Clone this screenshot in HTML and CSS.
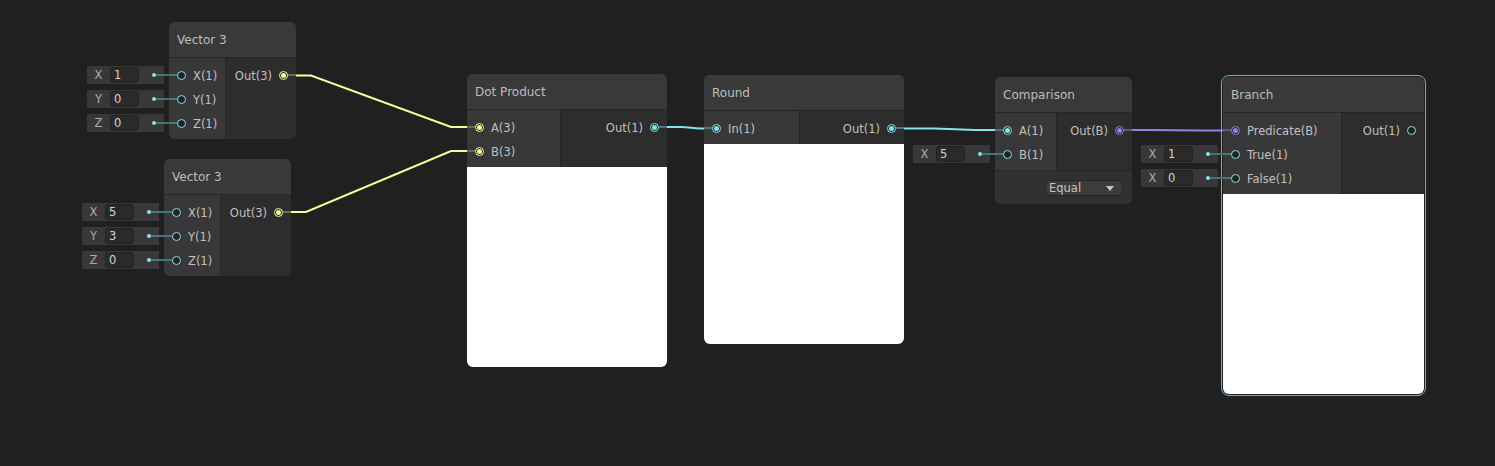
FILE: index.html
```html
<!DOCTYPE html>
<html>
<head>
<meta charset="utf-8">
<link rel="stylesheet" href="styles.css">
</head>
<body>
<div class="canvas">
  <svg class="edges" width="1495" height="466" viewBox="0 0 1495 466">
    <path class="e-v3" d="M296 75.5 H311 L451 127 H467"/>
    <path class="e-v3" d="M291 212 H306 L451 151 H467"/>
    <path class="e-v1" d="M667 127 H680 C690 127 692 128.5 700 128.5 H704"/>
    <path class="e-v1" d="M904 128.5 H935 L975 130 H995"/>
    <path class="e-b" d="M1132 130 H1150 L1200 130.5 H1223"/>
  </svg>

  <!-- Vector 3 (top) -->
  <div class="node" style="left:169px;top:22px;width:127px">
    <div class="title">Vector 3</div>
    <div class="ports">
      <div class="inputs" style="width:57px">
        <div class="port in">
          <div class="field"><span class="fl">X</span><span class="fv">1</span><span class="fdot"></span></div>
          <span class="wire"></span><span class="pc cy"></span><span class="lbl">X(1)</span>
        </div>
        <div class="port in">
          <div class="field"><span class="fl">Y</span><span class="fv">0</span><span class="fdot"></span></div>
          <span class="wire"></span><span class="pc cy"></span><span class="lbl">Y(1)</span>
        </div>
        <div class="port in">
          <div class="field"><span class="fl">Z</span><span class="fv">0</span><span class="fdot"></span></div>
          <span class="wire"></span><span class="pc cy"></span><span class="lbl">Z(1)</span>
        </div>
      </div>
      <div class="outputs">
        <div class="port out"><span class="lbl">Out(3)</span><span class="pc ye on"></span><span class="stub-o ye-s"></span></div>
      </div>
    </div>
  </div>

  <!-- Vector 3 (bottom) -->
  <div class="node" style="left:164px;top:159px;width:127px">
    <div class="title">Vector 3</div>
    <div class="ports">
      <div class="inputs" style="width:57px">
        <div class="port in">
          <div class="field"><span class="fl">X</span><span class="fv">5</span><span class="fdot"></span></div>
          <span class="wire"></span><span class="pc cy"></span><span class="lbl">X(1)</span>
        </div>
        <div class="port in">
          <div class="field"><span class="fl">Y</span><span class="fv">3</span><span class="fdot"></span></div>
          <span class="wire"></span><span class="pc cy"></span><span class="lbl">Y(1)</span>
        </div>
        <div class="port in">
          <div class="field"><span class="fl">Z</span><span class="fv">0</span><span class="fdot"></span></div>
          <span class="wire"></span><span class="pc cy"></span><span class="lbl">Z(1)</span>
        </div>
      </div>
      <div class="outputs">
        <div class="port out"><span class="lbl">Out(3)</span><span class="pc ye on"></span><span class="stub-o ye-s"></span></div>
      </div>
    </div>
  </div>

  <!-- Dot Product -->
  <div class="node" style="left:467px;top:74px;width:200px">
    <div class="title">Dot Product</div>
    <div class="ports">
      <div class="inputs" style="width:94px">
        <div class="port in"><span class="stub-i ye-s"></span><span class="pc ye on"></span><span class="lbl">A(3)</span></div>
        <div class="port in"><span class="stub-i ye-s"></span><span class="pc ye on"></span><span class="lbl">B(3)</span></div>
      </div>
      <div class="outputs">
        <div class="port out"><span class="lbl">Out(1)</span><span class="pc cy on"></span><span class="stub-o cy-s"></span></div>
      </div>
    </div>
    <div class="preview"></div>
  </div>

  <!-- Round -->
  <div class="node" style="left:704px;top:75px;width:200px">
    <div class="title">Round</div>
    <div class="ports">
      <div class="inputs" style="width:96px">
        <div class="port in"><span class="stub-i cy-s"></span><span class="pc cy on"></span><span class="lbl">In(1)</span></div>
      </div>
      <div class="outputs">
        <div class="port out"><span class="lbl">Out(1)</span><span class="pc cy on"></span><span class="stub-o cy-s"></span></div>
      </div>
    </div>
    <div class="preview"></div>
  </div>

  <!-- Comparison -->
  <div class="node" style="left:995px;top:77px;width:137px">
    <div class="title">Comparison</div>
    <div class="ports">
      <div class="inputs" style="width:62px">
        <div class="port in"><span class="stub-i cy-s"></span><span class="pc cy on"></span><span class="lbl">A(1)</span></div>
        <div class="port in">
          <div class="field"><span class="fl">X</span><span class="fv">5</span><span class="fdot"></span></div>
          <span class="wire"></span><span class="pc cy"></span><span class="lbl">B(1)</span>
        </div>
      </div>
      <div class="outputs">
        <div class="port out"><span class="lbl">Out(B)</span><span class="pc pu on"></span><span class="stub-o pu-s"></span></div>
      </div>
    </div>
    <div class="controls">
      <div class="dropdown"><span>Equal</span><span class="caret"></span></div>
    </div>
  </div>

  <!-- Branch (selected) -->
  <div class="selected" style="left:1221px;top:75px">
    <div class="node inner" style="width:201px">
      <div class="title">Branch</div>
      <div class="ports">
        <div class="inputs" style="width:119px">
          <div class="port in"><span class="stub-i pu-s"></span><span class="pc pu on"></span><span class="lbl">Predicate(B)</span></div>
          <div class="port in">
            <div class="field"><span class="fl">X</span><span class="fv">1</span><span class="fdot"></span></div>
            <span class="wire"></span><span class="pc cy"></span><span class="lbl">True(1)</span>
          </div>
          <div class="port in">
            <div class="field"><span class="fl">X</span><span class="fv">0</span><span class="fdot"></span></div>
            <span class="wire"></span><span class="pc cy"></span><span class="lbl">False(1)</span>
          </div>
        </div>
        <div class="outputs">
          <div class="port out"><span class="lbl">Out(1)</span><span class="pc cy"></span></div>
        </div>
      </div>
      <div class="preview"></div>
    </div>
  </div>
</div>
</body>
</html>
```

FILE: styles.css
```css
html, body {
  margin: 0;
  padding: 0;
  background: #202020;
}

.canvas {
  position: relative;
  width: 1495px;
  height: 466px;
  overflow: hidden;
  background: #202020;
  font-family: "DejaVu Sans", Verdana, sans-serif;
  color: #c0c0c0;
}

.edges {
  position: absolute;
  left: 0;
  top: 0;
}

.edges path {
  fill: none;
  stroke-width: 2;
}

.e-v3 { stroke: #f6ff9a; }
.e-v1 { stroke: #84e4e7; }
.e-b  { stroke: #9481e6; }

.node {
  position: absolute;
  display: flex;
  flex-direction: column;
  border-radius: 6px;
  background: #393939;
}

.node.inner {
  position: static;
}

.selected {
  position: absolute;
  border: 1px solid #44b8f8;
  border-radius: 8px;
  padding: 1px;
}

.title {
  height: 36px;
  box-sizing: border-box;
  padding-left: 8px;
  display: flex;
  align-items: center;
  font-size: 12px;
  color: #bdbdbd;
  background: #393939;
  border-radius: 6px 6px 0 0;
  border-bottom: 1px solid #262626;
}

.ports {
  display: flex;
  align-items: stretch;
}

.inputs {
  flex: none;
  box-sizing: border-box;
  padding: 5px 0 4px;
  background: #383838;
  border-right: 1px solid #262626;
}

.outputs {
  flex: 1;
  padding: 5px 0 4px;
  background: #2d2d2d;
}

.node > .ports:last-child .inputs { border-bottom-left-radius: 6px; }
.node > .ports:last-child .outputs { border-bottom-right-radius: 6px; }

.port {
  position: relative;
  height: 24px;
  display: flex;
  align-items: center;
  font-size: 11.5px;
  white-space: nowrap;
}

.port .lbl { padding-top: 1px; }

.port.in .pc { margin-left: 8px; }
.port.in .lbl { margin-left: 7px; }

.port.out { justify-content: flex-end; }
.port.out .lbl { margin-right: 7px; }
.port.out .pc { margin-right: 8px; }

.pc {
  position: relative;
  flex: none;
  box-sizing: border-box;
  width: 9px;
  height: 9px;
  border-radius: 50%;
  border: 1px solid #84e4e7;
  background: #222;
  z-index: 2;
}

.pc.cy { border-color: #84e4e7; }
.pc.ye { border-color: #f6ff9a; }
.pc.pu { border-color: #9481e6; }

.pc.on::after {
  content: "";
  position: absolute;
  left: 1px;
  top: 1px;
  width: 5px;
  height: 5px;
  border-radius: 50%;
}

.pc.cy.on::after { background: #84e4e7; }
.pc.ye.on::after { background: #f6ff9a; }
.pc.pu.on::after { background: #9481e6; }

.stub-i, .stub-o {
  position: absolute;
  top: 11px;
  height: 2px;
  width: 9px;
  z-index: 1;
}

.stub-i { left: 0; }
.stub-o { right: 0; }

.ye-s { background: #6b6d4f; }
.cy-s { background: #4f7476; }
.pu-s { background: #5c5580; }

.wire {
  position: absolute;
  left: -13px;
  top: 11px;
  width: 22px;
  height: 2px;
  background: #46777a;
  z-index: 1;
}

.field {
  position: absolute;
  right: calc(100% + 5px);
  top: 3px;
  width: 77px;
  height: 18px;
  display: flex;
  align-items: center;
  background: #383838;
  font-size: 11.5px;
}

.fl {
  width: 23px;
  text-align: center;
  color: #aaaaaa;
  flex: none;
}

.fv {
  box-sizing: border-box;
  width: 29px;
  height: 16px;
  line-height: 14px;
  padding-left: 3px;
  background: #2a2a2a;
  border: 1px solid #222222;
  border-radius: 3px;
  color: #d2d2d2;
  flex: none;
}

.fdot {
  position: absolute;
  right: 8px;
  top: 7px;
  width: 4px;
  height: 4px;
  border-radius: 50%;
  background: #84e4e7;
}

.preview {
  height: 200px;
  background: #ffffff;
  border-radius: 0 0 6px 6px;
}

.controls {
  height: 34px;
  box-sizing: border-box;
  border-top: 1px solid #262626;
  background: #313131;
  border-radius: 0 0 6px 6px;
  display: flex;
  justify-content: flex-end;
  align-items: flex-start;
  padding: 9px 9px 0 0;
}

.dropdown {
  box-sizing: border-box;
  width: 78px;
  height: 16px;
  display: flex;
  align-items: center;
  justify-content: space-between;
  padding: 0 8px 0 3px;
  background: #3c3c3c;
  border: 1px solid #252525;
  border-radius: 3px;
  font-size: 11.5px;
  color: #c4c4c4;
}

.caret {
  width: 0;
  height: 0;
  border-left: 4px solid transparent;
  border-right: 4px solid transparent;
  border-top: 5px solid #c4c4c4;
}
```
